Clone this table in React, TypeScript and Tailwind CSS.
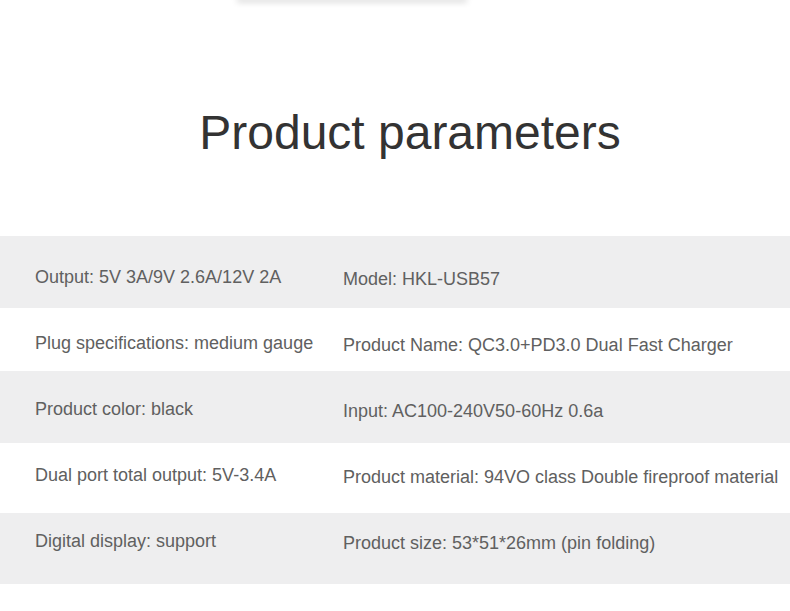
import React from "react";

const rows = [
  { left: "Output: 5V 3A/9V 2.6A/12V 2A", right: "Model: HKL-USB57", cls: "h-[72px] pt-[31px] bg-[#eeeeef]" },
  { left: "Plug specifications: medium gauge", right: "Product Name: QC3.0+PD3.0 Dual Fast Charger", cls: "h-[63px] pt-[25px] bg-white" },
  { left: "Product color: black", right: "Input: AC100-240V50-60Hz 0.6a", cls: "h-[72px] pt-[28px] bg-[#eeeeef]" },
  { left: "Dual port total output: 5V-3.4A", right: "Product material: 94VO class Double fireproof material", cls: "h-[70px] pt-[22px] bg-white" },
  { left: "Digital display: support", right: "Product size: 53*51*26mm (pin folding)", cls: "h-[71px] pt-[18px] bg-[#eeeeef]" },
];

export default function App() {
  return (
    <div className="w-[790px] h-[611px] bg-white overflow-hidden font-['Liberation_Sans',Arial,sans-serif]">
      {/* bottom edge of the card above */}
      <div className="ml-[237px] w-[230px] h-[4px] -mt-[4px] bg-white shadow-[0_2px_6px_rgba(0,0,0,0.18)]" />

      {/* Title */}
      <div className="h-[236px] flex items-center justify-center pt-[30px] pl-[30px]">
        <h1 className="text-[48px] leading-none text-[#333333]">Product parameters</h1>
      </div>

      {/* Parameter table */}
      <div className="flex flex-col">
        {rows.map((r) => (
          <div key={r.left} className={`flex text-[18px] leading-[20px] text-[#606060] ${r.cls}`}>
            <div className="w-[343px] pl-[35px] whitespace-nowrap">{r.left}</div>
            <div className="mt-[2px] whitespace-nowrap">{r.right}</div>
          </div>
        ))}
      </div>
    </div>
  );
}
